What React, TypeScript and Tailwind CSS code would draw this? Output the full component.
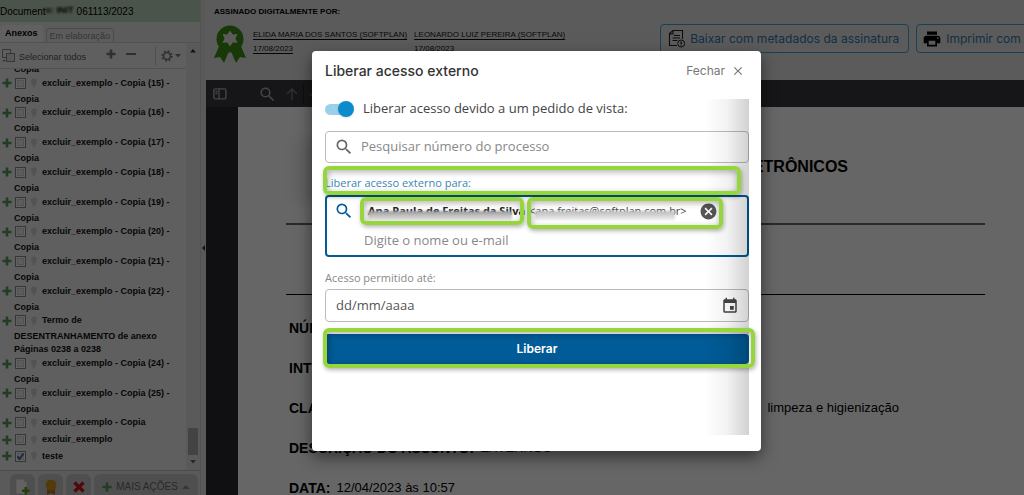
import React, { useState } from 'react';
import { MdSearch, MdCancel, MdEvent, MdPrint, MdClose } from 'react-icons/md';

interface Anexo {
  id: string;
  linhas: string[];
  marcado?: boolean;
}

const anexos: Anexo[] = [
  ...[15, 16, 17, 18, 19, 20, 21, 22].map(n => ({
    id: `copia-${n}`,
    linhas: [`excluir_exemplo - Copia (${n}) -`, 'Copia'],
  })),
  { id: 'termo', linhas: ['Termo de', 'DESENTRANHAMENTO de anexo', 'Páginas 0238 a 0238'] },
  { id: 'copia-24', linhas: ['excluir_exemplo - Copia (24) -', 'Copia'] },
  { id: 'copia-25', linhas: ['excluir_exemplo - Copia (25) -', 'Copia'] },
  { id: 'copia', linhas: ['excluir_exemplo - Copia'] },
  { id: 'exemplo', linhas: ['excluir_exemplo'] },
  { id: 'teste', linhas: ['teste'], marcado: true },
];

const campos = [
  { rotulo: 'NÚMERO:', valor: '' },
  { rotulo: 'INTERESSADO:', valor: '' },
  { rotulo: 'CLASSE:', valor: '', fim: 'limpeza e higienização' },
  { rotulo: 'DESCRIÇÃO DO ASSUNTO:', valor: 'EXTERNOS' },
  { rotulo: 'DATA:', valor: '12/04/2023 às 10:57' },
];

function Mais({ className = '' }: { className?: string }) {
  return (
    <svg viewBox="0 0 10 10" className={`h-[10px] w-[10px] shrink-0 ${className}`} aria-hidden="true">
      <path d="M3.7 0.5h2.6v3.2h3.2v2.6H6.3v3.2H3.7V6.3H0.5V3.7h3.2z" fill="currentColor" />
    </svg>
  );
}

// Green frame that calls attention to a field
function Destaque({ className }: { className: string }) {
  return (
    <span
      aria-hidden="true"
      className={`pointer-events-none absolute z-10 rounded-md border-4 border-[#97d53d] shadow-[1px_2px_4px_rgba(0,0,0,0.3),inset_1px_2px_6px_rgba(0,0,0,0.3)] ${className}`}
    />
  );
}

function ItemAnexo({ anexo }: { anexo: Anexo }) {
  const [marcado, setMarcado] = useState(!!anexo.marcado);
  const [titulo, ...resto] = anexo.linhas;

  return (
    <li className="pb-[3px]">
      <div className="flex h-[13px] items-center">
        <Mais className="mr-[3px] text-[#549a5c]" />
        <label className="flex items-center whitespace-nowrap">
          <span className="relative flex">
            <input
              type="checkbox"
              checked={marcado}
              onChange={e => setMarcado(e.target.checked)}
              className="h-[11px] w-[11px] appearance-none border border-[#888] bg-[#e9e9e9] shadow-[inset_0_0_0_1px_#f8f8f8,inset_0_0_0_2px_#ccc]"
            />
            {marcado && (
              <svg viewBox="0 0 11 11" className="pointer-events-none absolute inset-0 h-[11px] w-[11px]" aria-hidden="true">
                <path d="M2.6 5.4l2 2.6L8.4 2.6" fill="none" stroke="#3b57b5" strokeWidth="1.8" />
              </svg>
            )}
          </span>
          <svg viewBox="0 0 8 10" className="ml-1 h-[10px] w-2" aria-hidden="true">
            <circle cx="4" cy="3.6" r="3" fill="#d0d0d0" />
            <path d="M2.6 6h2.8v3.6L4 8.4 2.6 9.6z" fill="#d0d0d0" />
          </svg>
          <span className="ml-1">{titulo}</span>
        </label>
      </div>
      {resto.map(linha => (
        <div key={linha} className="mt-[3px] -mb-[3px] pl-3">{linha}</div>
      ))}
    </li>
  );
}

function Sidebar() {
  return (
    <aside className="flex w-[200px] shrink-0 flex-col bg-[#eee] font-['Liberation_Sans',sans-serif]">
      <h1 className="flex h-[22px] shrink-0 items-center bg-[#bcd2bc] text-[10px] text-black">
        Document
        <span className="w-[31px] overflow-hidden text-[9px] font-bold blur-[1px]">o: INIT</span>
        061113/2023
      </h1>
      <div className="flex h-[21px] shrink-0 items-end gap-[3px] border-b border-[#ccc] bg-[#e6e6e6]">
        <button type="button" className="h-[17px] rounded-t bg-[#f2f2f2] px-[5px] text-[9px] font-bold text-black">Anexos</button>
        <button type="button" className="h-[14px] rounded-t border border-b-0 border-[#bbb] px-[3px] text-[9px] leading-3 text-[#888]">Em elaboração</button>
      </div>

      <div className="flex min-h-0 flex-1">
        <div className="flex min-w-0 flex-1 flex-col">
          <div className="flex h-[26px] shrink-0 items-center border-b border-[#ccc] text-[#777]">
            <svg viewBox="0 0 16 16" className="ml-px h-4 w-4" fill="none" stroke="#888" aria-hidden="true">
              <path d="M5 9.500H1.500v-8h8V5" />
              <rect x="5.500" y="5.500" width="8" height="8" fill="#ddd" />
              <path d="M1.500 12h3L3 14z" fill="#777" stroke="none" />
            </svg>
            <button type="button" className="mt-[5px] ml-[2px] text-[9px] whitespace-nowrap text-[#555]">Selecionar todos</button>
            <button type="button" aria-label="Expandir" className="mb-1 ml-5"><Mais /></button>
            <button type="button" aria-label="Recolher" className="mb-1 ml-[10px] flex h-[10px] items-center"><span className="block h-[2px] w-[10px] bg-[#777]" /></button>
            <span className="ml-auto h-5 w-px bg-[#c4c4c4]" />
            <button type="button" aria-label="Configurações" className="mx-[5px] flex items-center gap-[2px]">
              <svg viewBox="0 0 12 12" className="h-3 w-3" fill="none" stroke="#777" aria-hidden="true">
                <circle cx="6" cy="6" r="3.400" strokeWidth="1.500" />
                <circle cx="6" cy="6" r="4.900" strokeWidth="1.600" strokeDasharray="1.900 1.950" />
              </svg>
              <svg viewBox="0 0 6 4" className="h-1 w-[6px]" aria-hidden="true"><path d="M0 0h6L3 3.500z" fill="#777" /></svg>
            </button>
          </div>
          <div className="min-h-0 flex-1 overflow-hidden">
            <ul className="-mt-[6px] flex h-[403px] flex-col justify-between pl-[2px] text-[9px] leading-[13px] font-bold text-[#111]">
              <li className="pl-3">Copia</li>
              {anexos.map(a => <ItemAnexo key={a.id} anexo={a} />)}
            </ul>
          </div>
        </div>
        <div className="flex w-[14px] shrink-0 flex-col items-center bg-[#e2e2e2] py-[6px]">
          <svg viewBox="0 0 6 4" className="h-1 w-[6px]" aria-hidden="true"><path d="M0 3.500h6L3 0z" fill="#333" /></svg>
          <span className="mt-auto mb-[5px] h-[27px] w-[10px] bg-[#a8a8a8]" />
          <svg viewBox="0 0 6 4" className="h-1 w-[6px]" aria-hidden="true"><path d="M0 0h6L3 3.500z" fill="#666" /></svg>
        </div>
      </div>

      <footer className="flex h-[25px] shrink-0 items-start gap-[3px] overflow-hidden border-t border-[#bbb] bg-[#e2e2e2] pt-[3px] pr-[2px] pl-[10px]">
        <button type="button" aria-label="Novo documento" className="flex h-[25px] w-[25px] shrink-0 items-center justify-center rounded-t-md bg-[#c6c6c6]">
          <svg viewBox="0 0 16 18" className="h-[18px] w-4" aria-hidden="true">
            <path d="M1 1h8l3 3v12H1z" fill="#f4f4f4" stroke="#bbb" strokeWidth=".6" />
            <path d="M9 1v3h3" fill="#ccc" />
            <path d="M9.500 9h2.500v2.500h2.500v2.500H12v2.500H9.500V14H7v-2.500h2.500z" fill="#59a51b" />
          </svg>
        </button>
        <button type="button" aria-label="Assinar" className="flex h-[25px] w-[25px] shrink-0 items-center justify-center rounded-t-md bg-[#c6c6c6]">
          <svg viewBox="0 0 14 16" className="h-4 w-[14px]" aria-hidden="true">
            <path d="M3 8h8v8l-4-2-4 2z" fill="#b97913" />
            <circle cx="7" cy="6" r="5.500" fill="#cf9420" />
          </svg>
        </button>
        <button type="button" aria-label="Excluir" className="flex h-[25px] w-[25px] shrink-0 items-center justify-center rounded-t-md bg-[#c6c6c6]">
          <svg viewBox="0 0 12 12" className="h-3 w-3" aria-hidden="true">
            <path d="M1.500 1.500l9 9M10.500 1.500l-9 9" stroke="#c81616" strokeWidth="3.200" />
          </svg>
        </button>
        <button type="button" className="flex h-[25px] flex-1 items-center justify-between rounded-t-md bg-[#c6c6c6] pr-2 pl-2 text-[10px] whitespace-nowrap text-[#666]">
          <Mais className="text-[#549a5c]" />
          MAIS AÇÕES
          <svg viewBox="0 0 8 4" className="h-1 w-2" aria-hidden="true"><path d="M0 4h8L4 0z" fill="#888" /></svg>
        </button>
      </footer>
    </aside>
  );
}

function Assinaturas() {
  const assinantes = ['ELIDA MARIA DOS SANTOS (SOFTPLAN)', 'LEONARDO LUIZ PEREIRA (SOFTPLAN)'];
  return (
    <header className="flex h-20 shrink-0 items-start overflow-hidden bg-[#e4e4e4]">
      <div className="shrink-0 pt-[6px] pl-2 font-['Liberation_Sans',sans-serif]">
        <h2 className="text-[8px] leading-3 font-bold text-black">ASSINADO DIGITALMENTE POR:</h2>
        <div className="mt-[7px] flex">
          <svg viewBox="0 0 32 38" className="h-[38px] w-8" aria-hidden="true">
            <path d="M6 19L0 33l6-1 4 6 6-14 6 14 4-6 6 1-6-14z" fill="#3e8c16" />
            <circle cx="16" cy="14" r="13.500" fill="#3e8c16" />
            <path d="M16 5.500l2.700 4 4.800-.4-2.100 4.400 2.100 4.300-4.800-.3-2.700 4.100-2.700-4.100-4.800.3 2.100-4.300-2.100-4.400 4.800.4z" fill="#e4e4e4" />
          </svg>
          <ul className="ml-[7px] flex gap-[7px] pt-[3px] text-[8px] leading-[14px] text-[#111]">
            {assinantes.map(nome => (
              <li key={nome}>
                <a href="#assinatura" className="block underline underline-offset-2">{nome}<br />17/08/2023</a>
              </li>
            ))}
          </ul>
        </div>
      </div>
      <div className="mt-6 ml-[95px] flex shrink-0 gap-[7px] font-['Inter',sans-serif] text-xs text-[#2f76a8]">
        <button type="button" className="flex h-[29px] w-[249px] items-center gap-1 rounded border border-[#3aa5d8] px-[7px] whitespace-nowrap">
          <svg viewBox="0 0 18 19" className="h-[19px] w-[18px] shrink-0" fill="none" stroke="#222" aria-hidden="true">
            <path d="M9 16.500H1.500v-12L5 1.500h9.500V10M5 1.500v3.500H1.500M6 6.500h6M4.500 9h7.500M4.500 11.500h5" strokeWidth="1.100" />
            <circle cx="13.200" cy="14.500" r="3.500" />
            <path d="M13.200 12.500v2.400M13.200 15.600v1" strokeWidth="1.400" />
          </svg>
          Baixar com metadados da assinatura
        </button>
        <button type="button" className="flex h-[29px] w-[180px] items-center gap-1 rounded border border-[#3aa5d8] px-[5px] whitespace-nowrap">
          <MdPrint className="h-5 w-5 text-black" />
          Imprimir com
        </button>
      </div>
    </header>
  );
}

function Documento() {
  return (
    <article className="min-w-0 flex-1 overflow-hidden bg-white pr-[39px] pl-12 font-['Liberation_Sans',sans-serif] text-black">
      <div className="flex h-[118px] items-start justify-between border-b-2 border-[#666]">
        <span aria-hidden="true" className="mt-8 h-16 w-16 bg-linear-to-r from-white to-[#c9c6c4] blur-[6px]" />
        <h2 className="mt-12 mr-[137px] text-base font-bold">ELETRÔNICOS</h2>
      </div>
      <div className="h-[70px] border-b border-black" />
      <dl className="px-[3px] pt-[13px] text-[13px]">
        {campos.map(c => (
          <div key={c.rotulo} className="flex h-10 items-center gap-[6px] whitespace-nowrap">
            <dt className="text-sm font-bold">{c.rotulo}</dt>
            <dd>{c.valor}</dd>
            {c.fim && <dd className="mr-[83px] ml-auto">{c.fim}</dd>}
          </div>
        ))}
      </dl>
    </article>
  );
}

function Visualizador() {
  return (
    <main className="flex min-w-0 flex-1 flex-col">
      <Assinaturas />
      <div className="flex h-[27px] shrink-0 items-center bg-[#38383d] pl-[7px] text-[#aaa]">
        <button type="button" aria-label="Painel">
          <svg viewBox="0 0 14 12" className="h-3 w-[14px]" fill="none" stroke="currentColor" strokeWidth="1.400" aria-hidden="true">
            <rect x=".9" y=".9" width="12" height="10" rx="1.500" />
            <path d="M6 1v10M2.500 3.500h2M2.500 5.500h2" />
          </svg>
        </button>
        <button type="button" aria-label="Localizar" className="ml-[33px]">
          <svg viewBox="0 0 14 14" className="h-[14px] w-[14px]" fill="none" stroke="currentColor" strokeWidth="1.600" aria-hidden="true">
            <circle cx="5.500" cy="5.500" r="4.300" /><path d="M8.700 8.700l4.800 4.800" />
          </svg>
        </button>
        <button type="button" aria-label="Anterior" className="ml-3 text-[#777]">
          <svg viewBox="0 0 12 12" className="h-3 w-3" fill="none" stroke="currentColor" strokeWidth="1.400" aria-hidden="true">
            <path d="M6 12V1M1 6l5-5 5 5" />
          </svg>
        </button>
        <span className="ml-[5px] h-5 w-px bg-[#222]" />
        <button type="button" aria-label="Próximo" className="ml-[5px] text-[#777]">
          <svg viewBox="0 0 12 12" className="h-3 w-3" fill="none" stroke="currentColor" strokeWidth="1.400" aria-hidden="true">
            <path d="M6 0v11M1 6l5 5 5-5" />
          </svg>
        </button>
      </div>
      <div className="flex min-h-0 flex-1 bg-[#2a2a2e] pl-8">
        <Documento />
      </div>
    </main>
  );
}

function LiberarAcesso() {
  const [pedidoVista, setPedidoVista] = useState(true);

  return (
    <div role="dialog" aria-modal="true" aria-labelledby="titulo" className="w-[449px] rounded bg-white pr-3 pb-4 pl-[13px] font-['Open_Sans',sans-serif] text-[#444] shadow-[0_6px_16px_rgba(0,0,0,0.5)]">
      <div className="flex h-12 items-center justify-between pb-2 font-['Inter',sans-serif]">
        <h2 id="titulo" className="text-sm font-medium text-[#333]">Liberar acesso externo</h2>
        <button type="button" className="flex items-center gap-[6px] pr-1 text-xs text-[#777]">
          Fechar <MdClose className="h-[14px] w-[14px]" />
        </button>
      </div>

      <form className="relative h-[336px]" onSubmit={e => e.preventDefault()}>
        <label className="flex h-5 items-center gap-[9px] text-[13px]">
          <span className="relative flex h-4 w-[29px] items-center">
            <input
              type="checkbox"
              role="switch"
              checked={pedidoVista}
              onChange={e => setPedidoVista(e.target.checked)}
              className="peer h-[11px] w-7 appearance-none rounded-full bg-[#ccc] checked:bg-[#9bd0ea]"
            />
            <span className="pointer-events-none absolute left-0 h-4 w-4 rounded-full bg-[#999] shadow peer-checked:right-0 peer-checked:left-auto peer-checked:bg-[#0b8bcc]" />
          </span>
          Liberar acesso devido a um pedido de vista:
        </label>

        <div className="mt-3 flex h-8 items-center gap-[7px] rounded border border-[#bbb] pl-2">
          <MdSearch className="h-5 w-5 text-[#666]" />
          <input type="text" aria-label="Número do processo" placeholder="Pesquisar número do processo" className="min-w-0 flex-1 text-[13px] outline-none placeholder:text-[#888]" />
        </div>

        <div className="relative mt-1 h-7 pt-2">
          <label htmlFor="pessoa" className="block text-[11px] leading-4 text-[#3a86b7]">Liberar acesso externo para:</label>
          <Destaque className="-top-px -left-[2px] right-2 h-[29px]" />
        </div>

        <div className="flex h-[62px] gap-[6px] rounded border-2 border-[#005b96] pl-[7px]">
          <MdSearch className="mt-1 h-5 w-5 shrink-0 text-[#005b96]" />
          <div className="flex min-w-0 flex-1 flex-col">
            <div className="flex h-7 items-center text-[11px]">
              <span className="relative flex h-full w-[164px] items-center pl-2">
                <b className="whitespace-nowrap text-[#222]">Ana Paula de Freitas da Silva</b>
                <span aria-hidden="true" className="absolute top-[14px] right-3 left-2 h-[9px] bg-linear-to-b from-[#999] to-[#e8e8e8] blur-[1px]" />
                <Destaque className="inset-0" />
              </span>
              <span className="relative ml-[3px] flex h-full w-[196px] items-center">
                <span className="pl-[2px] whitespace-nowrap">&lt;ana.freitas@softplan.com.br&gt;</span>
                <span aria-hidden="true" className="absolute top-[14px] right-12 left-2 h-[9px] bg-linear-to-b from-[#bbb] to-[#eee] blur-[1px]" />
                <button type="button" aria-label="Remover" className="absolute right-[5px]">
                  <MdCancel className="h-[19px] w-[19px] text-[#555]" />
                </button>
                <Destaque className="inset-x-0 top-0 h-8" />
              </span>
            </div>
            <input id="pessoa" type="text" placeholder="Digite o nome ou e-mail" className="mt-1 h-[22px] w-60 pl-1 text-[13px] outline-none placeholder:text-[#888]" />
          </div>
        </div>

        <label htmlFor="validade" className="mt-[13px] block text-[11px] leading-4 text-[#888]">Acesso permitido até:</label>
        <div className="mt-[3px] flex h-[33px] items-center rounded border border-[#bbb] pr-[9px] pl-[10px]">
          <input id="validade" type="text" placeholder="dd/mm/aaaa" className="min-w-0 flex-1 text-[13px] outline-none placeholder:text-[#555]" />
          <button type="button" aria-label="Abrir calendário"><MdEvent className="h-[18px] w-[18px] text-[#444]" /></button>
        </div>

        <div className="relative mt-3">
          <button type="submit" className="h-[30px] w-full rounded bg-[#005b96] font-['Inter',sans-serif] text-xs font-semibold text-white">Liberar</button>
          <Destaque className="-top-[6px] -right-[6px] -bottom-1 -left-[2px]" />
        </div>

        <span aria-hidden="true" className="pointer-events-none absolute inset-y-0 right-0 w-11 bg-linear-to-r from-transparent via-black/5 to-black/18" />
      </form>
    </div>
  );
}

export default function App() {
  return (
    <div className="relative flex h-screen overflow-hidden">
      <Sidebar />
      <div className="flex w-[6px] shrink-0 items-center justify-center border-l border-[#ccc] bg-[#dedede]">
        <svg viewBox="0 0 3 6" className="h-[6px] w-[3px]" aria-hidden="true"><path d="M3 0v6L0 3z" fill="#333" /></svg>
      </div>
      <Visualizador />
      <div className="absolute inset-0 flex items-start justify-center bg-black/60 pt-[51px] pl-[49px]">
        <LiberarAcesso />
      </div>
    </div>
  );
}
